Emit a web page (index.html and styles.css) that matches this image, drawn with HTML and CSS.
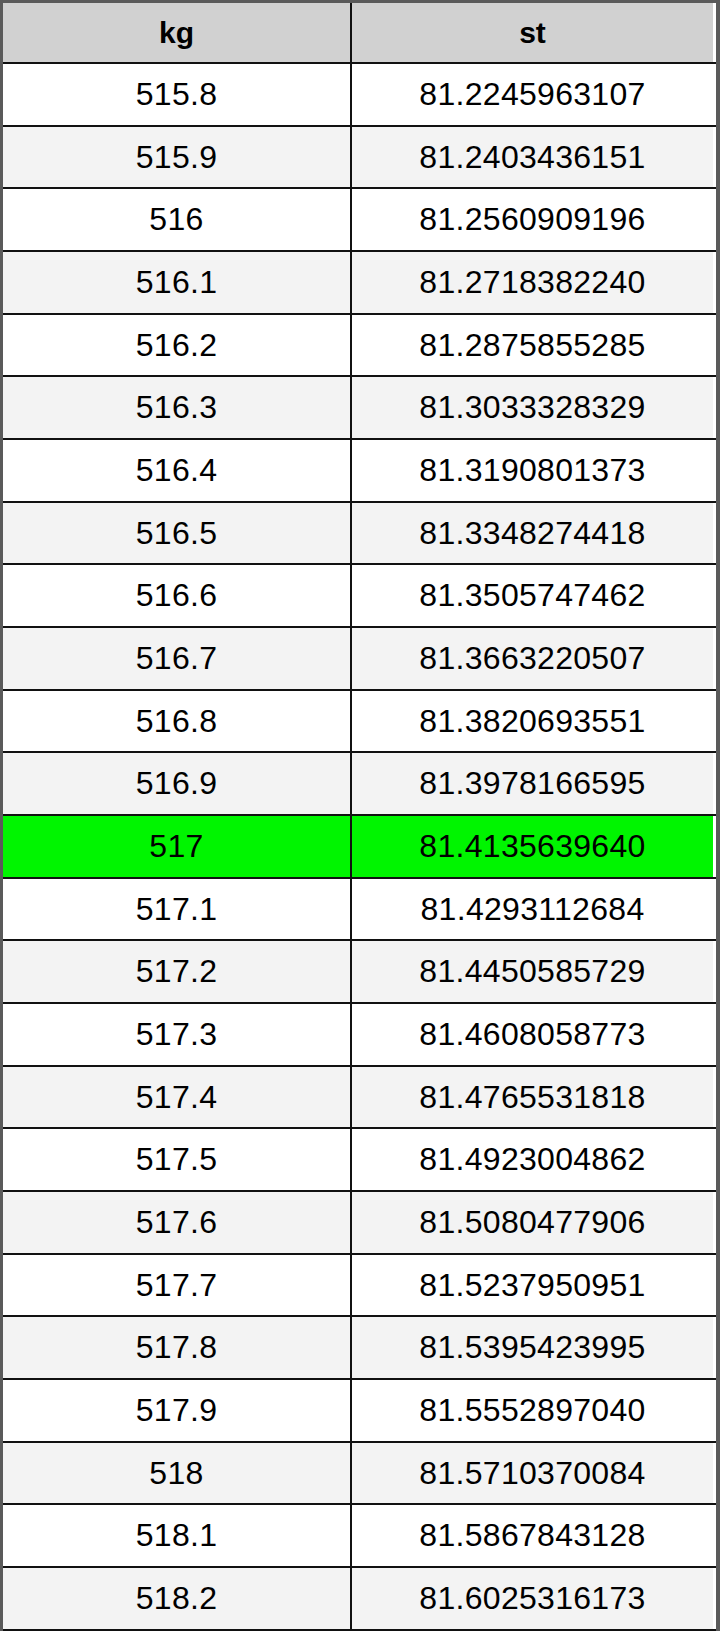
FILE: index.html
```html
<!DOCTYPE html>
<html>
<head>
<meta charset="utf-8">
<link rel="stylesheet" href="styles.css">
</head>
<body>
<div class="table">
  <div class="row head"><div class="cell c1">kg</div><div class="cell c2">st</div></div>
  <div class="row"><div class="cell c1">515.8</div><div class="cell c2">81.2245963107</div></div>
  <div class="row alt"><div class="cell c1">515.9</div><div class="cell c2">81.2403436151</div></div>
  <div class="row"><div class="cell c1">516</div><div class="cell c2">81.2560909196</div></div>
  <div class="row alt"><div class="cell c1">516.1</div><div class="cell c2">81.2718382240</div></div>
  <div class="row"><div class="cell c1">516.2</div><div class="cell c2">81.2875855285</div></div>
  <div class="row alt"><div class="cell c1">516.3</div><div class="cell c2">81.3033328329</div></div>
  <div class="row"><div class="cell c1">516.4</div><div class="cell c2">81.3190801373</div></div>
  <div class="row alt"><div class="cell c1">516.5</div><div class="cell c2">81.3348274418</div></div>
  <div class="row"><div class="cell c1">516.6</div><div class="cell c2">81.3505747462</div></div>
  <div class="row alt"><div class="cell c1">516.7</div><div class="cell c2">81.3663220507</div></div>
  <div class="row"><div class="cell c1">516.8</div><div class="cell c2">81.3820693551</div></div>
  <div class="row alt"><div class="cell c1">516.9</div><div class="cell c2">81.3978166595</div></div>
  <div class="row hl"><div class="cell c1">517</div><div class="cell c2">81.4135639640</div></div>
  <div class="row"><div class="cell c1">517.1</div><div class="cell c2">81.4293112684</div></div>
  <div class="row alt"><div class="cell c1">517.2</div><div class="cell c2">81.4450585729</div></div>
  <div class="row"><div class="cell c1">517.3</div><div class="cell c2">81.4608058773</div></div>
  <div class="row alt"><div class="cell c1">517.4</div><div class="cell c2">81.4765531818</div></div>
  <div class="row"><div class="cell c1">517.5</div><div class="cell c2">81.4923004862</div></div>
  <div class="row alt"><div class="cell c1">517.6</div><div class="cell c2">81.5080477906</div></div>
  <div class="row"><div class="cell c1">517.7</div><div class="cell c2">81.5237950951</div></div>
  <div class="row alt"><div class="cell c1">517.8</div><div class="cell c2">81.5395423995</div></div>
  <div class="row"><div class="cell c1">517.9</div><div class="cell c2">81.5552897040</div></div>
  <div class="row alt"><div class="cell c1">518</div><div class="cell c2">81.5710370084</div></div>
  <div class="row"><div class="cell c1">518.1</div><div class="cell c2">81.5867843128</div></div>
  <div class="row alt"><div class="cell c1">518.2</div><div class="cell c2">81.6025316173</div></div>
</div>
</body>
</html>
```
FILE: styles.css
```css
html, body {
  margin: 0;
  padding: 0;
  background: #ffffff;
}
.table {
  width: 720px;
  box-sizing: border-box;
  border-top: 3px solid #5a5a5a;
  border-left: 3px solid #5a5a5a;
  border-right: 4px solid #5a5a5a;
  font-family: "Liberation Sans", Arial, sans-serif;
  color: #000000;
}
.row {
  display: flex;
  height: 62.68px;
  box-sizing: border-box;
  border-bottom: 2px solid #111111;
  padding-right: 3px;
  background: #ffffff;
}
.row.head {
  height: 61px;
}
.cell {
  display: flex;
  align-items: center;
  justify-content: center;
  font-size: 32px;
  letter-spacing: 0.3px;
}
.c1 {
  width: 349px;
  box-sizing: border-box;
  border-right: 2px solid #111111;
}
.c2 {
  width: 361px;
}
.head .cell {
  background: #d1d1d1;
  font-weight: bold;
  font-size: 30px;
  letter-spacing: 0;
}
.alt .cell {
  background: #f3f3f3;
}
.hl .cell {
  background: #00f500;
}
```
